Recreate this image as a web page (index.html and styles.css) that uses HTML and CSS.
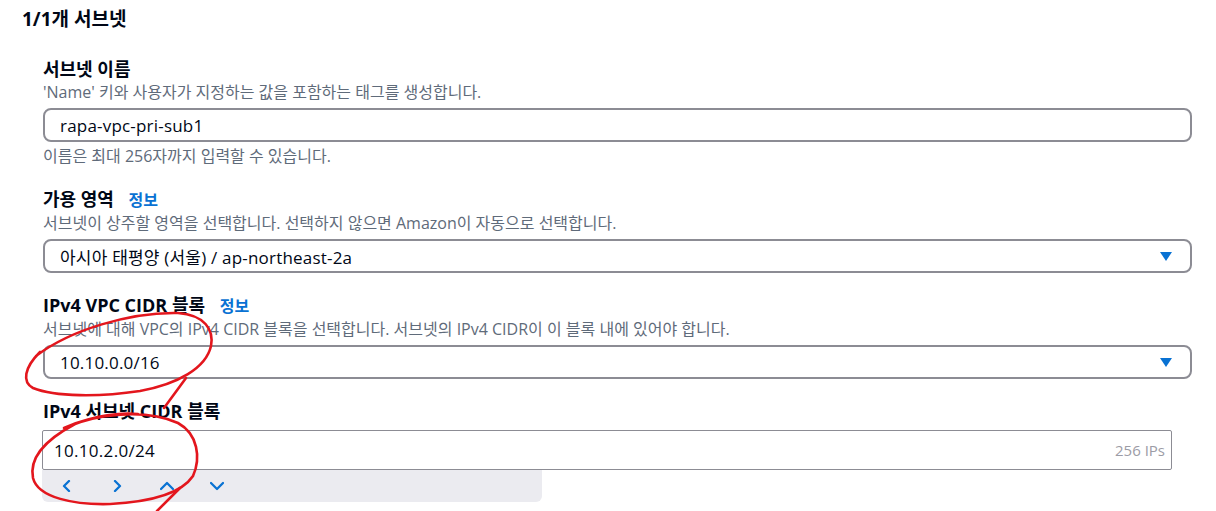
FILE: index.html
```html
<!DOCTYPE html>
<html lang="ko">
  <head>
    <meta charset="UTF-8" />
    <meta name="viewport" content="width=device-width, initial-scale=1.0" />
    <title>서브넷 설정</title>
    <link rel="stylesheet" href="styles.css">
  </head>
  <body>
    <main class="page">
      <h2 class="section-title">1/1개 서브넷</h2>
      <div class="fields">
        <div class="field">
          <div class="label">서브넷 이름</div>
          <div class="desc">'Name' 키와 사용자가 지정하는 값을 포함하는 태그를 생성합니다.</div>
          <div class="control">rapa-vpc-pri-sub1</div>
          <div class="hint">이름은 최대 256자까지 입력할 수 있습니다.</div>
        </div>
        <div class="field">
          <div class="label">가용 영역 <a class="info">정보</a></div>
          <div class="desc">서브넷이 상주할 영역을 선택합니다. 선택하지 않으면 Amazon이 자동으로 선택합니다.</div>
          <div class="control select">
            <span>아시아 태평양 (서울) / ap-northeast-2a</span>
            <span class="caret"></span>
          </div>
        </div>
        <div class="field">
          <div class="label">IPv4 VPC CIDR 블록 <a class="info">정보</a></div>
          <div class="desc">서브넷에 대해 VPC의 IPv4 CIDR 블록을 선택합니다. 서브넷의 IPv4 CIDR이 이 블록 내에 있어야 합니다.</div>
          <div class="control select">
            <span>10.10.0.0/16</span>
            <span class="caret"></span>
          </div>
        </div>
        <div class="field">
          <div class="label">IPv4 서브넷 CIDR 블록</div>
          <div class="cidr-input">
            <span>10.10.2.0/24</span>
            <span class="ip-count">256 IPs</span>
          </div>
          <div class="stepper">
            <button class="step">
              <svg width="12" height="12" viewBox="0 0 12 12"><polyline points="8,1 3,6 8,11" /></svg>
            </button>
            <button class="step">
              <svg width="12" height="12" viewBox="0 0 12 12"><polyline points="4,1 9,6 4,11" /></svg>
            </button>
            <button class="step">
              <svg width="14" height="12" viewBox="0 0 14 12"><polyline points="1,9 7,3 13,9" /></svg>
            </button>
            <button class="step">
              <svg width="14" height="12" viewBox="0 0 14 12"><polyline points="1,3 7,9 13,3" /></svg>
            </button>
          </div>
        </div>
      </div>
    </main>

    <!-- red pen marks drawn over the screenshot -->
    <svg class="marks" width="1216" height="511" viewBox="0 0 1216 511">
      <path d="M36 356 C 70 330, 130 312, 178 313 C 205 315, 214 330, 211 346 C 206 368, 178 384, 140 391 C 100 397, 55 397, 33 388 C 22 382, 24 368, 40 352" />
      <path d="M186 378 L 164 408" />
      <path d="M64 428 C 95 414, 145 408, 178 423 C 198 434, 201 458, 193 476 C 181 494, 148 502, 110 504 C 75 505, 38 498, 33 478 C 29 458, 45 440, 75 424 C 95 416, 120 412, 138 414" />
      <path d="M180 488 L 157 511" />
    </svg>
  </body>
</html>
```

FILE: styles.css
```css
body,
html {
  margin: 0;
  padding: 0;
  background-color: #fff;
  color: #000716;
  font-family: "Open Sans", "Noto Sans CJK KR", sans-serif;
}
body {
  position: relative;
  width: 1216px;
  height: 511px;
  overflow: hidden;
}
.page {
  padding: 8px 24px 0 22px;
}
.section-title {
  margin: 0;
  font-size: 19px;
  line-height: 22px;
  font-weight: 700;
}
.fields {
  margin-left: 21px;
}
.field {
  margin-top: 21px;
}
.field:first-child {
  margin-top: 28px;
}
.label {
  font-size: 18px;
  line-height: 22px;
  font-weight: 700;
}
.info {
  margin-left: 10px;
  color: #0972d3;
  font-size: 16px;
  font-weight: 700;
  text-decoration: none;
}
.desc {
  margin-top: 1px;
  font-size: 16px;
  line-height: 22px;
  color: #5f6b7a;
}
.hint {
  margin-top: 4px;
  font-size: 16px;
  line-height: 21px;
  color: #5f6b7a;
}
.control {
  box-sizing: border-box;
  margin-top: 5px;
  height: 34px;
  border: 2px solid #8c8c94;
  border-radius: 8px;
  padding: 0 18px 0 15px;
  display: flex;
  align-items: center;
  font-size: 17px;
  letter-spacing: 0.2px;
}
.select {
  justify-content: space-between;
}
.caret {
  width: 0;
  height: 0;
  border-left: 6.5px solid transparent;
  border-right: 6.5px solid transparent;
  border-top: 9px solid #0972d3;
}
.cidr-input {
  box-sizing: border-box;
  margin: 8px 0 0 -1px;
  width: 1130px;
  height: 40px;
  border: 1px solid #8c8c94;
  border-radius: 2px;
  padding: 0 6px 0 11px;
  display: flex;
  align-items: center;
  justify-content: space-between;
  font-size: 17px;
  letter-spacing: 0.3px;
}
.ip-count {
  font-size: 15px;
  letter-spacing: 0;
  color: #9c9ca6;
}
.stepper {
  margin-left: -1px;
  width: 500px;
  height: 32px;
  background-color: #ebebf0;
  border-radius: 0 0 6px 6px;
  display: flex;
}
.step {
  width: 50px;
  height: 32px;
  padding: 0;
  border: none;
  background: none;
  display: flex;
  align-items: center;
  justify-content: center;
}
.step svg {
  fill: none;
  stroke: #0972d3;
  stroke-width: 2.3;
  stroke-linecap: round;
  stroke-linejoin: round;
}
.marks {
  position: absolute;
  top: 0;
  left: 0;
  pointer-events: none;
  fill: none;
  stroke: #e3161d;
  stroke-width: 2.6;
  stroke-linecap: round;
}
```
